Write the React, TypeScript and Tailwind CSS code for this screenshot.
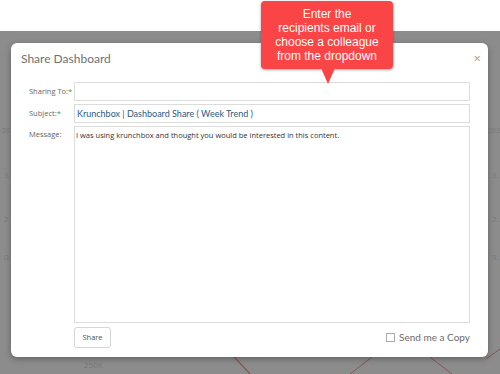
import React from 'react';

export default function App() {
  return (
    <div className="relative w-[500px] h-[374px] overflow-hidden bg-white font-['Open_Sans',sans-serif]">
      <div className="h-[31px] bg-white" />
      {/* dimmed dashboard behind modal */}
      <div className="relative h-[343px] bg-[#8c8c8c] pt-[12px] pl-[11px]">
        <div className="absolute left-[2px] top-[95px] text-[7px] text-[#7a7a7a]">202</div>
        <div className="absolute left-[4px] top-[138px] text-[8px] text-[#7a7a7a]">3.</div>
        <div className="absolute left-[4px] top-[182px] text-[8px] text-[#7a7a7a]">2.</div>
        <div className="absolute left-[4px] top-[220px] text-[8px] text-[#7a7a7a]">0.</div>
        <div className="absolute left-[488px] top-[95px] text-[7px] text-[#7a7a7a]">202</div>
        <div className="absolute left-[492px] top-[138px] text-[8px] text-[#7a7a7a]">3.</div>
        <div className="absolute left-[492px] top-[182px] text-[8px] text-[#7a7a7a]">2.</div>
        <div className="absolute left-[492px] top-[220px] text-[8px] text-[#7a7a7a]">9.</div>
        <div className="absolute left-[84px] top-[328px] text-[8px] text-[#777]">250K</div>
        <svg className="absolute left-0 top-[310px]" width="500" height="33">
          <path d="M225 6 L250 33" stroke="#8a5555" strokeWidth="1.2" fill="none" />
          <path d="M350 33 L372 16" stroke="#8a5555" strokeWidth="1" fill="none" />
          <path d="M430 16 L452 33" stroke="#8a5555" strokeWidth="1" fill="none" />
          <path d="M486 18 L500 8" stroke="#8a5555" strokeWidth="1" fill="none" />
        </svg>

        <div className="relative w-[477px] h-[314px] bg-white rounded-[6px] shadow-[0_2px_6px_rgba(0,0,0,0.3)]">
          <div className="flex items-center justify-between h-[30px] pl-[10px] pr-[7px]">
            <span className="font-['Lato',sans-serif] text-[12px] text-[#707070] pt-[2px]">Share Dashboard</span>
            <span className="text-[13px] leading-none text-[#a0a0a0]">×</span>
          </div>
          <div className="flex flex-col gap-[3px] pl-[18px] pr-[18px] pt-[9px] text-[7.5px] text-[#666]">
            <div className="flex items-center">
              <span className="w-[45px]">Sharing To:<span className="text-[#3a9a3a]">*</span></span>
              <div className="w-[396px] h-[19px] border border-[#dcdcdc]" />
            </div>
            <div className="flex items-center">
              <span className="w-[45px]">Subject:<span className="text-[#3a9a3a]">*</span></span>
              <div className="w-[396px] h-[19px] border border-[#dcdcdc] flex items-center px-[2px] font-['Lato',sans-serif] text-[9px] text-[#2b5a80]">
                Krunchbox | Dashboard Share ( Week Trend )
              </div>
            </div>
            <div className="flex items-start">
              <span className="w-[45px] pt-[3px]">Message:</span>
              <div className="w-[396px] h-[197px] border border-[#dcdcdc] px-[1px] pt-[3px] text-[7.5px] text-[#333]">
                I was using krunchbox and thought you would be interested in this content.
              </div>
            </div>
            <div className="flex items-center justify-between pl-[45px] pt-[1px]">
              <button className="w-[37px] h-[21px] border border-[#d6d6d6] rounded-[3px] text-[7.5px] text-[#555] bg-white">Share</button>
              <label className="flex items-center gap-[4px] font-['Lato',sans-serif] text-[10px] text-[#6b6b6b]">
                <span className="w-[9px] h-[9px] border border-[#aaa] bg-white" />
                Send me a Copy
              </label>
            </div>
          </div>
        </div>
      </div>

      {/* tooltip */}
      <div className="absolute left-[261px] top-[1px] w-[132px] h-[68px] rounded-[4px] bg-[#f94545] shadow-[0_1px_3px_rgba(0,0,0,0.35)] flex items-center justify-center text-center text-white font-['Liberation_Sans',Arial,sans-serif] text-[12px] leading-[14px]">
        Enter the<br />recipients email or<br />choose a colleague<br />from the dropdown
      </div>
      <div className="absolute left-[321px] top-[68px] w-0 h-0 border-l-[7px] border-r-[7px] border-t-[16px] border-l-transparent border-r-transparent border-t-[#f94545]" />
    </div>
  );
}
